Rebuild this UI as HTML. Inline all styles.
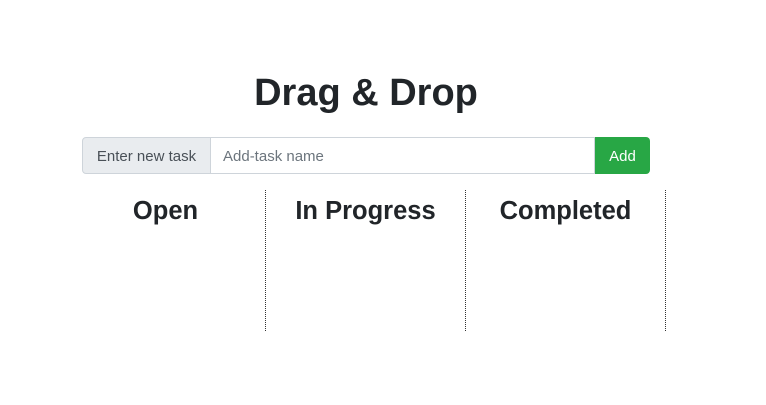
<!DOCTYPE html>
<html><head><style>
body{margin:0;width:766px;height:405px;background:#fff;font-family:"Liberation Sans",sans-serif;color:#212529;position:relative}
h1{position:absolute;top:69px;left:0;width:732px;text-align:center;margin:0;font-size:38px;font-weight:bold;line-height:48px}
.ig{position:absolute;left:82px;top:137px;width:568px;height:37px;display:flex}
.ad{width:129px;background:#e9ecef;border:1px solid #ced4da;border-radius:4px 0 0 4px;font-size:15px;color:#495057;display:flex;align-items:center;justify-content:center;box-sizing:border-box;padding-top:2px}
.in{flex:1;border:1px solid #ced4da;border-left:none;font-size:15px;color:#6c757d;display:flex;align-items:center;padding-left:12px;padding-top:2px}
.bt{width:55px;background:#28a745;color:#fff;font-size:15px;display:flex;align-items:center;justify-content:center;border-radius:0 4px 4px 0;padding-top:2px}
.col{position:absolute;top:190px;width:199px;height:141px;border-right:1px dotted #333;text-align:center}
.col h2{margin:0;font-size:25.5px;font-weight:bold;line-height:42px}
</style></head><body>
<h1>Drag &amp; Drop</h1>
<div class="ig"><div class="ad">Enter new task</div><div class="in">Add-task name</div><div class="bt">Add</div></div>
<div class="col" style="left:66px"><h2>Open</h2></div>
<div class="col" style="left:266px"><h2>In Progress</h2></div>
<div class="col" style="left:466px"><h2>Completed</h2></div>
</body></html>
